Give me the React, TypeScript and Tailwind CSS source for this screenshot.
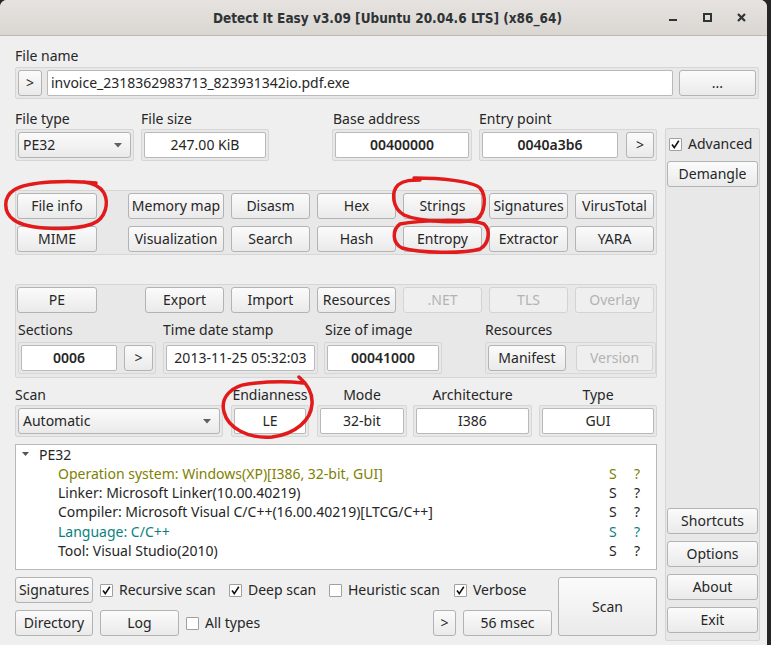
import React from "react";

function Btn({ label, cls = "", disabled = false }: { label: string; cls?: string; disabled?: boolean }) {
  return (
    <div
      className={
        "flex shrink-0 items-center justify-center rounded-[3px] border leading-none " +
        (disabled
          ? "border-[#d3d3d3] bg-[#efefef] text-[#b3b3b3] "
          : "border-[#b3b3b3] bg-linear-to-b from-[#fbfbfb] to-[#eaeaea] text-[#262626] ") +
        cls
      }
    >
      {label}
    </div>
  );
}

function Field({ value, cls = "", bold = false }: { value: string; cls?: string; bold?: boolean }) {
  return (
    <div
      className={
        "flex h-[26px] shrink-0 items-center justify-center rounded-[2px] border border-[#b9b9b9] bg-white leading-none text-[#262626] " +
        (bold ? "font-semibold " : "") +
        cls
      }
    >
      {value}
    </div>
  );
}

function Frame({ children, cls = "" }: { children: React.ReactNode; cls?: string }) {
  return (
    <div className={"flex shrink-0 rounded-[2px] border border-[#d6d6d6] bg-[#e8e8e8] p-[2px] " + cls}>{children}</div>
  );
}

function Combo({ value, cls = "" }: { value: string; cls?: string }) {
  return (
    <div
      className={
        "flex h-[26px] items-center justify-between rounded-[3px] border border-[#b3b3b3] bg-linear-to-b from-[#fbfbfb] to-[#eaeaea] pl-[4px] pr-[8px] leading-none text-[#262626] " +
        cls
      }
    >
      <span>{value}</span>
      <svg width="8" height="5" viewBox="0 0 8 5">
        <path d="M0 0 L8 0 L4 4.5 Z" fill="#606060" />
      </svg>
    </div>
  );
}

function Check({ checked, label, cls = "" }: { checked: boolean; label: string; cls?: string }) {
  return (
    <div className={"flex shrink-0 items-center gap-[6px] " + cls}>
      <div className="flex h-[13px] w-[13px] items-center justify-center rounded-[1px] border border-[#a0a0a0] bg-white">
        {checked && (
          <svg width="11" height="11" viewBox="0 0 11 11">
            <path d="M2 5.5 L4.3 8.6 L8.8 1.8" fill="none" stroke="#111" strokeWidth="1.6" />
          </svg>
        )}
      </div>
      <span className="leading-none">{label}</span>
    </div>
  );
}

function Label({ text, cls = "" }: { text: string; cls?: string }) {
  return <div className={"flex h-[19px] items-center leading-none text-[#262626] " + cls}>{text}</div>;
}

export default function App() {
  return (
    <div className="flex h-[645px] w-[771px] bg-[#262626] font-['Noto_Sans',sans-serif] text-[14px] text-[#262626]">
      <div className="relative flex h-[645px] w-[767px] flex-col overflow-hidden rounded-t-[7px] bg-[#efefef]">
        {/* Title bar */}
        <div className="grid h-[36px] shrink-0 grid-cols-[1fr_auto_1fr] items-center border-b border-[#bfb9b2] bg-linear-to-b from-[#e6e3e0] to-[#dad6d2]">
          <div />
          <div className="pl-[8px] font-['DejaVu_Sans_Condensed','DejaVu_Sans',sans-serif] text-[13.5px] font-bold text-[#2e3436] [font-stretch:condensed]">
            Detect It Easy v3.09 [Ubuntu 20.04.6 LTS] (x86_64)
          </div>
          <div className="flex items-center justify-end pr-[11px]">
            <svg width="90" height="36" viewBox="0 0 90 36">
              <rect x="3" y="19" width="8" height="2" fill="#2e3436" />
              <rect x="38" y="14" width="7" height="7" fill="none" stroke="#2e3436" strokeWidth="2" />
              <path d="M72 14 L79 21 M79 14 L72 21" stroke="#2e3436" strokeWidth="2.2" />
            </svg>
          </div>
        </div>

        {/* Body */}
        <div className="flex flex-col pl-[15px]">
          <Label text="File name" cls="mt-[10px]" />
          <Frame cls="mt-[2px] w-[744px] gap-[5px]">
            <Btn label=">" cls="h-[26px] w-[24px]" />
            <div className="flex h-[26px] w-[626px] items-center rounded-[2px] border border-[#b9b9b9] bg-white pl-[3px] leading-none">
              invoice_2318362983713_823931342io.pdf.exe
            </div>
            <Btn label="..." cls="ml-[1px] h-[26px] w-[77px]" />
          </Frame>

          <div className="mt-[10px] flex">
            {/* Left column */}
            <div className="flex w-[642px] flex-col">
              {/* Row 2 */}
              <div className="flex">
                <div className="flex w-[119px] flex-col">
                  <Label text="File type" />
                  <Frame cls="mt-[1px]">
                    <Combo value="PE32" cls="w-[113px]" />
                  </Frame>
                </div>
                <div className="ml-[7px] flex w-[128px] flex-col">
                  <Label text="File size" />
                  <Frame cls="mt-[1px]">
                    <Field value="247.00 KiB" cls="w-[122px]" />
                  </Frame>
                </div>
                <div className="ml-[63px] flex w-[140px] flex-col">
                  <Label text="Base address" cls="pl-[1px]" />
                  <Frame cls="mt-[1px]">
                    <Field value="00400000" bold cls="w-[134px]" />
                  </Frame>
                </div>
                <div className="ml-[7px] flex w-[178px] flex-col">
                  <Label text="Entry point" />
                  <Frame cls="mt-[1px] gap-[8px]">
                    <Field value="0040a3b6" bold cls="w-[136px]" />
                    <Btn label=">" cls="h-[26px] w-[28px]" />
                  </Frame>
                </div>
              </div>

              {/* Tabs group */}
              <div className="mt-[29px] flex flex-col gap-[7px] rounded-[2px] border border-[#d6d6d6] bg-[#e8e8e8] px-[1px] py-[2px]">
                <div className="flex gap-[7px]">
                  <Btn label="File info" cls="h-[26px] w-[80px]" />
                  <Btn label="Memory map" cls="ml-[24px] h-[26px] w-[96px]" />
                  <Btn label="Disasm" cls="h-[26px] w-[79px]" />
                  <Btn label="Hex" cls="h-[26px] w-[79px]" />
                  <Btn label="Strings" cls="h-[26px] w-[79px]" />
                  <Btn label="Signatures" cls="h-[26px] w-[79px]" />
                  <Btn label="VirusTotal" cls="h-[26px] w-[79px]" />
                </div>
                <div className="flex gap-[7px]">
                  <Btn label="MIME" cls="h-[26px] w-[80px]" />
                  <Btn label="Visualization" cls="ml-[24px] h-[26px] w-[96px]" />
                  <Btn label="Search" cls="h-[26px] w-[79px]" />
                  <Btn label="Hash" cls="h-[26px] w-[79px]" />
                  <Btn label="Entropy" cls="h-[26px] w-[79px]" />
                  <Btn label="Extractor" cls="h-[26px] w-[79px]" />
                  <Btn label="YARA" cls="h-[26px] w-[79px]" />
                </div>
              </div>

              {/* PE group */}
              <div className="mt-[29px] flex flex-col rounded-[2px] border border-[#d6d6d6] bg-[#e8e8e8] px-[1px] pb-[3px] pt-[2px]">
                <div className="flex gap-[7px]">
                  <Btn label="PE" cls="h-[26px] w-[80px]" />
                  <Btn label="Export" cls="ml-[41px] h-[26px] w-[79px]" />
                  <Btn label="Import" cls="h-[26px] w-[79px]" />
                  <Btn label="Resources" cls="h-[26px] w-[79px]" />
                  <Btn label=".NET" disabled cls="h-[26px] w-[79px]" />
                  <Btn label="TLS" disabled cls="h-[26px] w-[79px]" />
                  <Btn label="Overlay" disabled cls="h-[26px] w-[79px]" />
                </div>
                <div className="mt-[7px] flex">
                  <div className="ml-[1px] flex w-[138px] flex-col">
                    <Label text="Sections" />
                    <Frame cls="mt-[3px] gap-[7px]">
                      <Field value="0006" bold cls="w-[96px]" />
                      <Btn label=">" cls="h-[26px] w-[29px]" />
                    </Frame>
                  </div>
                  <div className="ml-[7px] flex w-[155px] flex-col">
                    <Label text="Time date stamp" />
                    <Frame cls="mt-[3px]">
                      <Field value="2013-11-25 05:32:03" cls="w-[149px]" />
                    </Frame>
                  </div>
                  <div className="ml-[6px] flex w-[118px] flex-col">
                    <Label text="Size of image" cls="pl-[1px]" />
                    <Frame cls="mt-[3px]">
                      <Field value="00041000" bold cls="w-[112px]" />
                    </Frame>
                  </div>
                  <div className="ml-[43px] flex w-[171px] flex-col">
                    <Label text="Resources" />
                    <Frame cls="mt-[3px] gap-[10px]">
                      <Btn label="Manifest" cls="h-[26px] w-[78px]" />
                      <Btn label="Version" disabled cls="h-[26px] w-[77px]" />
                    </Frame>
                  </div>
                </div>
              </div>

              {/* Scan row */}
              <div className="mt-[7px] flex">
                <div className="flex w-[208px] flex-col">
                  <Label text="Scan" />
                  <Frame cls="mt-[1px]">
                    <Combo value="Automatic" cls="w-[202px]" />
                  </Frame>
                </div>
                <div className="ml-[8px] flex w-[78px] flex-col">
                  <Label text="Endianness" cls="justify-center" />
                  <Frame cls="mt-[1px]">
                    <Field value="LE" cls="w-[72px]" />
                  </Frame>
                </div>
                <div className="ml-[8px] flex w-[90px] flex-col">
                  <Label text="Mode" cls="justify-center" />
                  <Frame cls="mt-[1px]">
                    <Field value="32-bit" cls="w-[84px]" />
                  </Frame>
                </div>
                <div className="ml-[6px] flex w-[119px] flex-col">
                  <Label text="Architecture" cls="justify-center" />
                  <Frame cls="mt-[1px]">
                    <Field value="I386" cls="w-[113px]" />
                  </Frame>
                </div>
                <div className="ml-[7px] flex w-[118px] flex-col">
                  <Label text="Type" cls="justify-center" />
                  <Frame cls="mt-[1px]">
                    <Field value="GUI" cls="w-[112px]" />
                  </Frame>
                </div>
              </div>

              {/* Result tree */}
              <div className="mt-[7px] flex h-[126px] flex-col border border-[#b9b9b9] bg-white leading-none">
                <div className="flex h-[19px] items-center">
                  <svg width="7" height="5" viewBox="0 0 7 5" className="ml-[6px]">
                    <path d="M0 0 L7 0 L3.5 4 Z" fill="#555" />
                  </svg>
                  <span className="ml-[10px]">PE32</span>
                </div>
                {[
                  ["Operation system: Windows(XP)[I386, 32-bit, GUI]", "text-[#7f7f00]"],
                  ["Linker: Microsoft Linker(10.00.40219)", "text-[#262626]"],
                  ["Compiler: Microsoft Visual C/C++(16.00.40219)[LTCG/C++]", "text-[#262626]"],
                  ["Language: C/C++", "text-[#0a7f80]"],
                  ["Tool: Visual Studio(2010)", "text-[#262626]"],
                ].map(([t, c]) => (
                  <div key={t} className={"flex h-[19.3px] items-center " + c}>
                    <span className="ml-[42px] w-[551px]">{t}</span>
                    <span className="w-[25px]">S</span>
                    <span>?</span>
                  </div>
                ))}
              </div>

              {/* Bottom rows */}
              <div className="mt-[7px] flex">
                <div className="flex w-[537px] flex-col gap-[7px]">
                  <div className="flex items-center">
                    <Btn label="Signatures" cls="h-[26px] w-[78px]" />
                    <Check checked label="Recursive scan" cls="ml-[7px] w-[129px]" />
                    <Check checked label="Deep scan" cls="w-[100px]" />
                    <Check checked={false} label="Heuristic scan" cls="w-[125px]" />
                    <Check checked label="Verbose" />
                  </div>
                  <div className="flex items-center">
                    <Btn label="Directory" cls="h-[26px] w-[78px]" />
                    <Btn label="Log" cls="ml-[7px] h-[26px] w-[79px]" />
                    <Check checked={false} label="All types" cls="ml-[7px]" />
                    <div className="flex-1" />
                    <Btn label=">" cls="h-[26px] w-[23px]" />
                    <Btn label="56 msec" cls="ml-[7px] h-[26px] w-[89px]" />
                  </div>
                </div>
                <Btn label="Scan" cls="ml-[6px] h-[59px] w-[99px]" />
              </div>
            </div>

            {/* Right panel */}
            <div className="ml-[8px] mt-[19px] flex h-[513px] w-[95px] flex-col rounded-[2px] border border-[#d6d6d6] bg-[#e8e8e8] px-[1px] pb-[7px]">
              <Check checked label="Advanced" cls="ml-[2px] mt-[5px] h-[20px]" />
              <Btn label="Demangle" cls="mt-[7px] h-[26px] w-[91px]" />
              <div className="flex-1" />
              <div className="flex flex-col gap-[7px]">
                <Btn label="Shortcuts" cls="h-[26px] w-[91px]" />
                <Btn label="Options" cls="h-[26px] w-[91px]" />
                <Btn label="About" cls="h-[26px] w-[91px]" />
                <Btn label="Exit" cls="h-[26px] w-[91px]" />
              </div>
            </div>
          </div>
        </div>

        {/* Red hand-drawn annotations */}
        <svg
          className="pointer-events-none absolute left-0 top-0"
          width="767"
          height="645"
          viewBox="0 0 767 645"
          fill="none"
          stroke="#e11b1b"
          strokeWidth="3.5"
          strokeLinecap="round"
          strokeLinejoin="round"
        >
          <path d="M96 183 C 70 180, 28 181, 14 190 C 3 197, 3 212, 14 220 C 28 230, 72 231, 92 224 C 106 219, 109 203, 104 193 C 100 186, 92 183, 84 182" />
          <path d="M414 178 C 440 178, 472 181, 480 188 C 487 196, 485 213, 477 219 C 462 224, 420 222, 404 215 C 392 208, 391 192, 398 185 C 404 180, 412 180, 420 180" />
          <path d="M400 224 C 420 220, 470 219, 484 224 C 491 230, 489 244, 480 249 C 462 254, 420 253, 402 248 C 392 243, 392 230, 400 224" />
          <path d="M299 377 C 306 383, 313 392, 312 404 C 311 420, 296 434, 272 437 C 248 439, 228 428, 224 412 C 220 397, 232 386, 248 384 C 264 382, 285 381, 303 383" />
        </svg>
      </div>
    </div>
  );
}
